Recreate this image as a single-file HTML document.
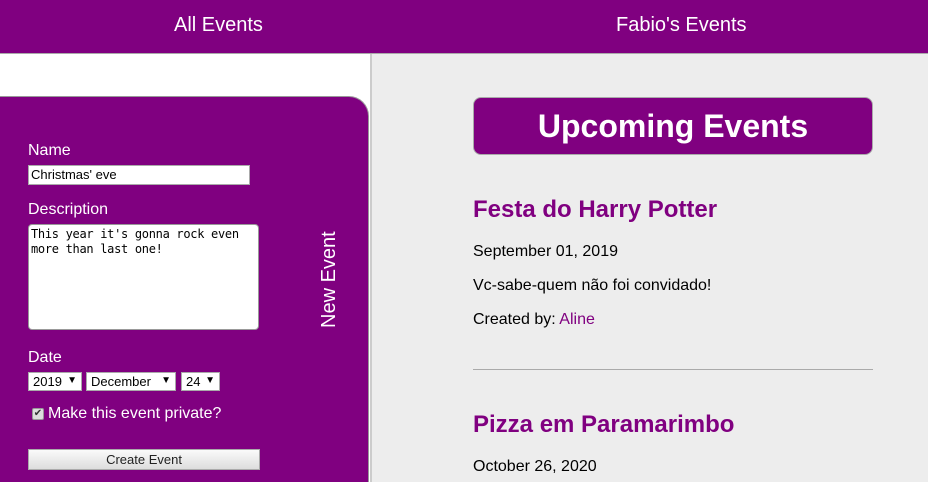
<!DOCTYPE html>
<html style="overflow:hidden;height:482px"><head><meta charset="utf-8"><style>
*{box-sizing:border-box}
body{margin:0;width:928px;height:482px;overflow:hidden;font-family:"Liberation Sans",Arial,sans-serif;background:#ededed;position:relative}
.hdr{position:absolute;left:0;top:0;width:928px;height:54px;background:#800080;border-bottom:1px solid #aaa;color:#fff;font-size:20px}
.hdr span{position:absolute;top:14px}
.left{position:absolute;left:0;top:54px;width:372px;height:428px;background:#fff;border-right:2px solid #ccc}
.panel{position:absolute;left:-20px;top:96px;width:389px;height:386px;background:#800080;border-radius:20px 20px 0 0;border:1px solid #999;border-bottom:0;color:#fff}
.lbl{position:absolute;left:28px;font-size:16px;color:#fff}
.t{position:absolute;left:28px;top:165px;width:222px;height:20px;background:#fff;border:1px solid #aaa;font-size:13px;padding:1px 2px;color:#000}
.ta{position:absolute;left:28px;top:224px;width:231px;height:106px;background:#fff;border:1px solid #999;border-radius:4px;font-family:"DejaVu Sans Mono","Liberation Mono",monospace;font-size:12px;letter-spacing:-0.3px;line-height:15px;padding:2px 2px;color:#000}
.sel{position:absolute;top:372px;height:19px;background:#fff;border:1px solid #aaa;font-size:13px;color:#000;padding:1px 4px}
.sel i{position:absolute;right:4px;top:2px;font-style:normal;font-size:10px}
.btn{position:absolute;left:28px;top:449px;width:232px;height:21px;background:linear-gradient(#fafafa,#ddd);border:1px solid #aaa;font-size:13px;color:#222;text-align:center;line-height:19px}
.vert{position:absolute;left:318px;top:328px;transform:rotate(-90deg);transform-origin:0 0;font-size:20px;color:#fff;white-space:nowrap}
.up{position:absolute;left:473px;top:97px;width:400px;height:58px;background:#800080;border:1px solid #aaa;border-radius:8px;color:#fff;font-size:32px;font-weight:bold;text-align:center;line-height:56px}
.h{position:absolute;left:473px;color:#800080;font-size:24px;font-weight:bold}
.p{position:absolute;left:473px;font-size:16px;color:#000}
.p a{color:#800080}
hr{position:absolute;left:473px;top:369px;width:400px;margin:0;border:0;border-top:1px solid #aaa}
</style></head><body>
<div class="hdr"><span style="left:174px">All Events</span><span style="left:616px">Fabio's Events</span></div>
<div class="left"></div>
<div class="panel"></div>
<div class="lbl" style="top:142px">Name</div>
<div class="t">Christmas' eve</div>
<div class="lbl" style="top:201px">Description</div>
<div class="ta">This year it's gonna rock even more than last one!</div>
<div class="vert">New Event</div>
<div class="lbl" style="top:349px">Date</div>
<div class="sel" style="left:28px;width:54px">2019<i>▼</i></div>
<div class="sel" style="left:86px;width:90px">December<i>▼</i></div>
<div class="sel" style="left:181px;width:39px">24<i>▼</i></div>
<div style="position:absolute;left:32px;top:408px;width:12px;height:12px;background:#ddd;border:1px solid #999;border-radius:2px;font-size:10px;line-height:10px;text-align:center;color:#333">✔</div>
<div class="lbl" style="left:48px;top:405px">Make this event private?</div>
<div class="btn">Create Event</div>
<div class="up">Upcoming Events</div>
<div class="h" style="top:196px">Festa do Harry Potter</div>
<div class="p" style="top:243px">September 01, 2019</div>
<div class="p" style="top:277px">Vc-sabe-quem não foi convidado!</div>
<div class="p" style="top:311px">Created by: <a>Aline</a></div>
<hr>
<div class="h" style="top:411px">Pizza em Paramarimbo</div>
<div class="p" style="top:458px">October 26, 2020</div>
</body></html>
